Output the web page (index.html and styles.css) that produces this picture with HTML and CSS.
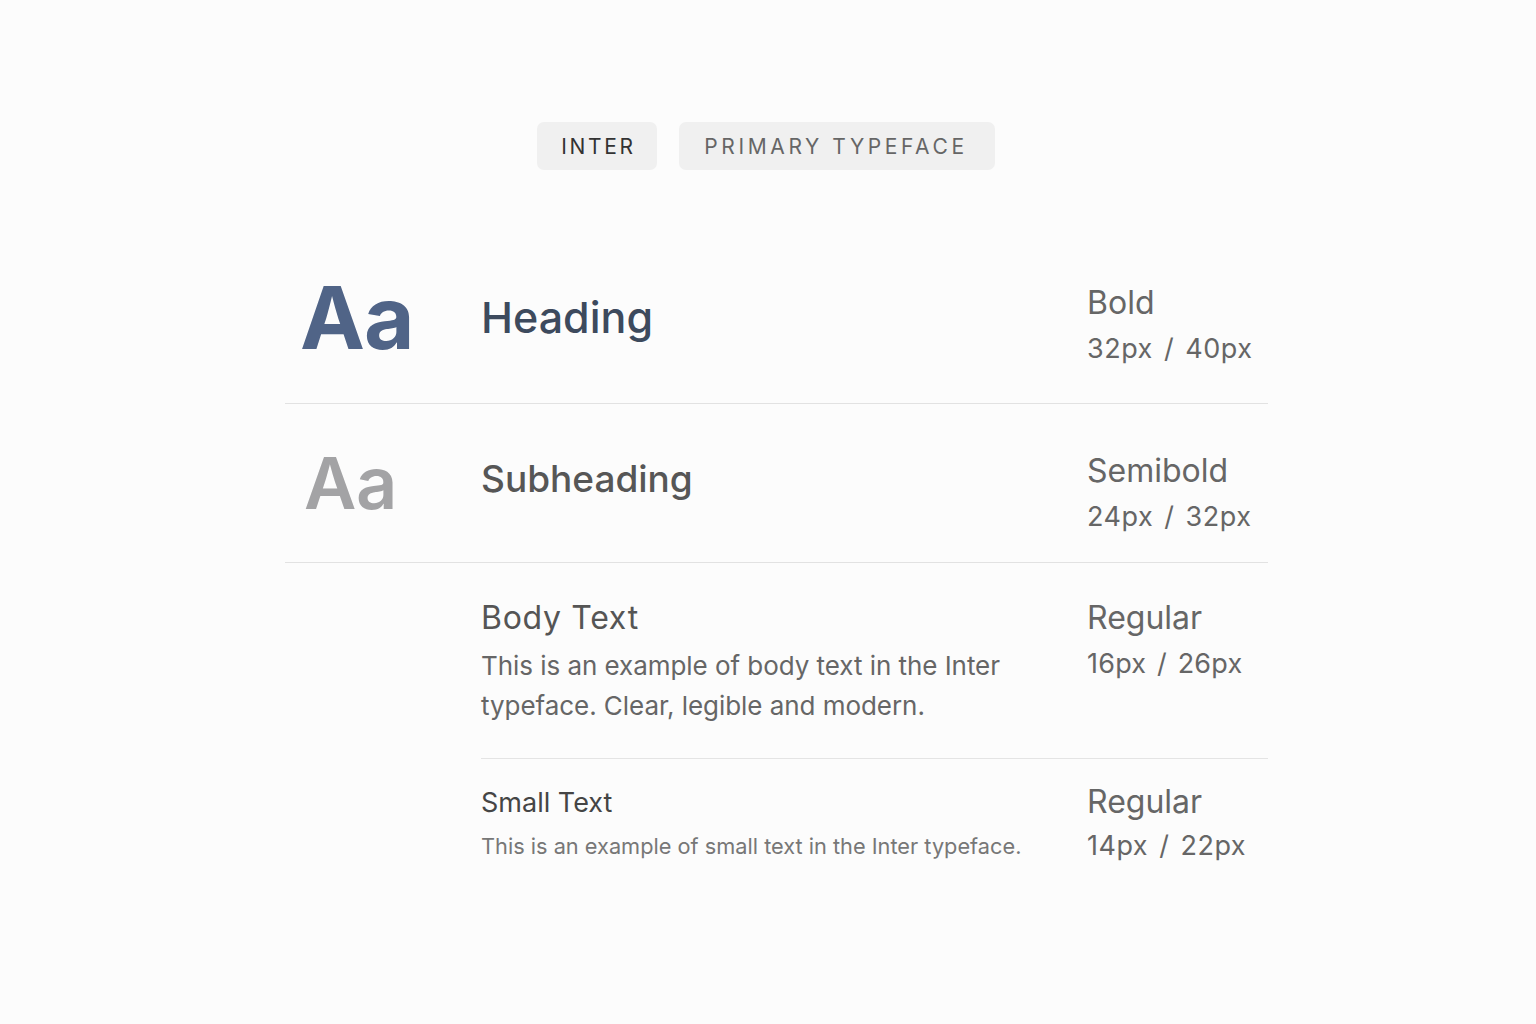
FILE: index.html
```html
<!DOCTYPE html>
<html lang="en">
<head>
<meta charset="utf-8">
<title>Inter — Primary Typeface</title>
<link rel="stylesheet" href="styles.css">
</head>
<body>
<div class="page">
  <div class="tags">
    <span class="tag tag-dark">INTER</span>
    <span class="tag tag-light">PRIMARY TYPEFACE</span>
  </div>

  <div class="scale">
    <div class="row row-heading">
      <div class="sample sample-heading">Aa</div>
      <div class="name name-heading">Heading</div>
      <div class="meta meta-heading">
        <div class="weight">Bold</div>
        <div class="size">32px / 40px</div>
      </div>
    </div>

    <div class="row row-sub">
      <div class="sample sample-sub">Aa</div>
      <div class="name name-sub">Subheading</div>
      <div class="meta meta-sub">
        <div class="weight">Semibold</div>
        <div class="size">24px / 32px</div>
      </div>
    </div>

    <div class="text-rows">
      <div class="trow trow-body">
        <div class="tdesc">
          <div class="tname tname-body">Body Text</div>
          <p class="tcopy tcopy-body">This is an example of body text in the Inter typeface. Clear, legible and modern.</p>
        </div>
        <div class="meta meta-body">
          <div class="weight">Regular</div>
          <div class="size size-body">16px / 26px</div>
        </div>
      </div>
      <div class="trow trow-small">
        <div class="tdesc">
          <div class="tname tname-small">Small Text</div>
          <p class="tcopy tcopy-small">This is an example of small text in the Inter typeface.</p>
        </div>
        <div class="meta meta-small">
          <div class="weight">Regular</div>
          <div class="size size-small">14px / 22px</div>
        </div>
      </div>
    </div>
  </div>
</div>
</body>
</html>
```

FILE: styles.css
```css
* { box-sizing: border-box; }

html, body {
  margin: 0;
  padding: 0;
  background: #fcfcfc;
}

body {
  font-family: "Inter", "Noto Sans", "Liberation Sans", sans-serif;
  color: #555;
  width: 1536px;
  height: 1024px;
  overflow: hidden;
}

.page {
  padding-top: 122px;
}

.tags {
  display: flex;
  justify-content: center;
  gap: 22px;
  padding-right: 4px;
}

.tag {
  display: flex;
  align-items: center;
  height: 48px;
  border-radius: 7px;
  background: #f0f0f0;
  font-size: 21px;
  letter-spacing: 2.6px;
  font-weight: 400;
}

.tag-dark {
  color: #333;
  padding: 0 21px 0 24px;
  width: 120px;
}

.tag-light {
  color: #666;
  letter-spacing: 3.6px;
  padding: 0 27px 0 25px;
}

.scale {
  width: 983px;
  margin: 75px 0 0 285px;
}

.row {
  display: grid;
  grid-template-columns: 196px 606px 181px;
  align-items: center;
  height: 159px;
  border-bottom: 1px solid #e2e2e2;
}

.row-heading {
  padding-bottom: 13px;
}

.sample {
  font-weight: 700;
  line-height: 1;
  padding-left: 15px;
}

.sample-heading {
  font-size: 87px;
  color: #506487;
  letter-spacing: -1px;
}

.sample-sub {
  font-size: 72px;
  font-weight: 600;
  color: #a3a3a5;
  padding-left: 19px;
  letter-spacing: -0.5px;
}

.name {
  line-height: 1.2;
}

.name-heading {
  font-size: 43px;
  font-weight: 500;
  color: #3d4a5d;
}

.name-sub {
  font-size: 37px;
  font-weight: 500;
  color: #565656;
  margin-top: -7px;
}

.meta {
  color: #666;
}

.meta .weight {
  font-size: 32px;
  line-height: 40px;
}

.meta .size {
  font-size: 27px;
  line-height: 40px;
  margin-top: 6px;
  letter-spacing: 0.5px;
  word-spacing: 3px;
}

.meta .size-body {
  letter-spacing: 0.2px;
}

.meta-heading {
  margin-top: 16px;
}

.meta-sub {
  margin-top: 22px;
}

.text-rows {
  margin-left: 196px;
}

.trow {
  display: grid;
  grid-template-columns: 606px 181px;
  align-items: start;
}

.trow-body {
  padding: 35px 0 32px;
  border-bottom: 1px solid #e4e4e4;
}

.trow-small {
  padding-top: 28px;
}

.tname {
  color: #555;
}

.tname-body {
  font-size: 32px;
  line-height: 40px;
  letter-spacing: 0.7px;
}

.tname-small {
  font-size: 27px;
  line-height: 32px;
  color: #454545;
}

.tcopy {
  margin: 0;
}

.tcopy-body {
  font-size: 26px;
  line-height: 40px;
  color: #666;
  margin-top: 8px;
  max-width: 560px;
  letter-spacing: -0.05px;
}

.tcopy-small {
  font-size: 21.75px;
  line-height: 32px;
  color: #777;
  margin-top: 11px;
  white-space: nowrap;
}

.meta-small {
  margin-top: -5px;
}

.meta-small .size {
  margin-top: 4px;
}
```
